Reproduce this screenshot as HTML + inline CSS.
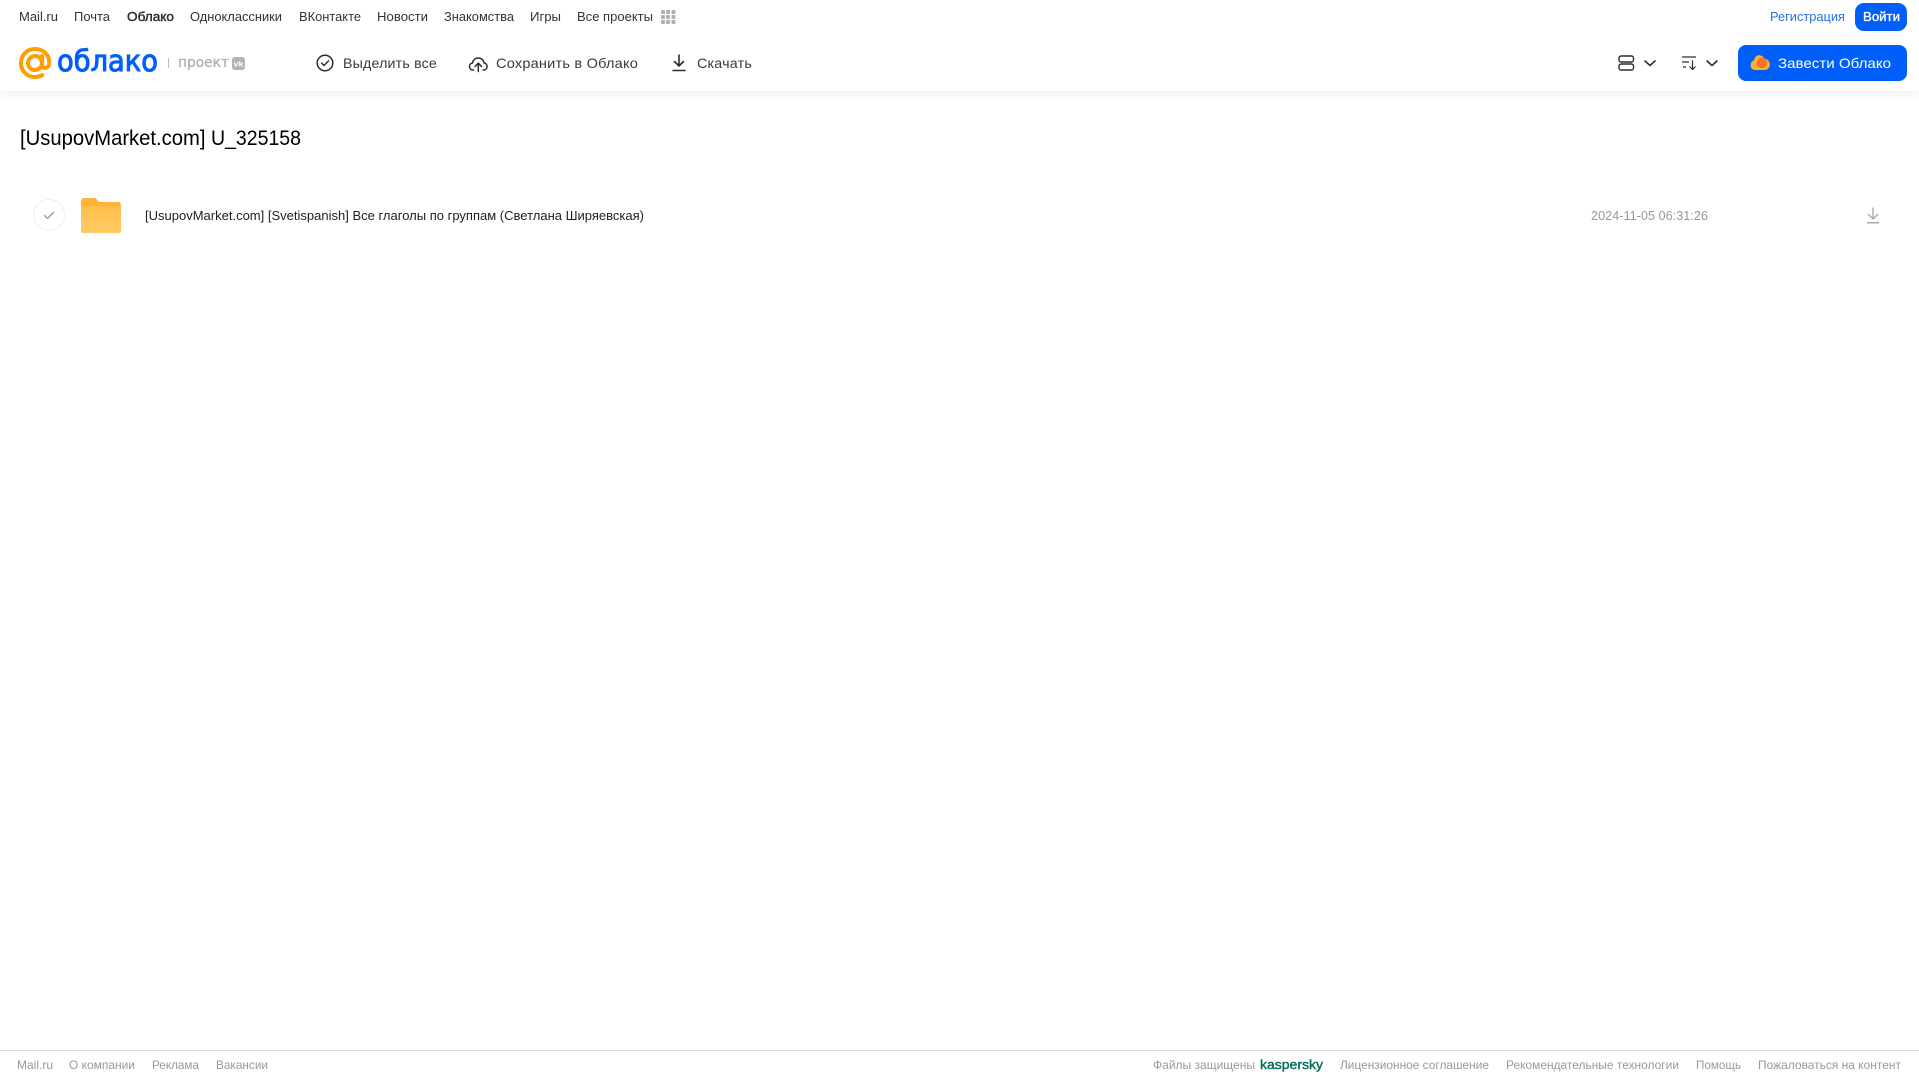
<!DOCTYPE html>
<html lang="ru"><head><meta charset="utf-8"><title>Облако</title>
<style>
html,body{margin:0;padding:0;width:1919px;height:1079px;overflow:hidden;background:#fff}
.hdr{position:absolute;left:0;top:0;width:1919px;height:91px;background:#fff;box-shadow:0 2px 10px rgba(0,0,0,.07)}
.ftr{position:absolute;left:0;top:1050px;width:1919px;height:29px;border-top:1px solid #d9d9d9;box-sizing:border-box}
svg{position:absolute;left:0;top:0}
text{font-family:"Liberation Sans",sans-serif}
.t{font-size:12.5px;fill:#333}
.b{font-size:14px;fill:#3a3a3a;letter-spacing:.2px}
.f{font-size:12px;fill:#999}
</style></head><body>
<div class="hdr"></div><div class="ftr"></div>
<svg width="1919" height="1079" viewBox="0 0 1919 1079">
<defs><linearGradient id="fg" x1="0" y1="0" x2="0" y2="1"><stop offset="0" stop-color="#ffbe4a"/><stop offset="1" stop-color="#ffcb66"/></linearGradient></defs>
<text class="t" x="19" y="21" textLength="39" lengthAdjust="spacingAndGlyphs">Mail.ru</text>
<text class="t" x="74" y="21" textLength="36" lengthAdjust="spacingAndGlyphs">Почта</text>
<text class="t" x="127" y="21" textLength="47" lengthAdjust="spacingAndGlyphs" stroke="#333" stroke-width=".45" style="fill:#2c2d2e">Облако</text>
<text class="t" x="190" y="21" textLength="92" lengthAdjust="spacingAndGlyphs">Одноклассники</text>
<text class="t" x="299" y="21" textLength="62" lengthAdjust="spacingAndGlyphs">ВКонтакте</text>
<text class="t" x="377" y="21" textLength="51" lengthAdjust="spacingAndGlyphs">Новости</text>
<text class="t" x="444" y="21" textLength="70" lengthAdjust="spacingAndGlyphs">Знакомства</text>
<text class="t" x="530" y="21" textLength="31" lengthAdjust="spacingAndGlyphs">Игры</text>
<text class="t" x="577" y="21" textLength="76" lengthAdjust="spacingAndGlyphs">Все проекты</text>
<g fill="#b0b0b0">
<rect x="661" y="10" width="4" height="4" rx="1"/><rect x="666" y="10" width="4" height="4" rx="1"/><rect x="671.500" y="10" width="4" height="4" rx="1"/>
<rect x="661" y="15" width="4" height="4" rx="1"/><rect x="666" y="15" width="4" height="4" rx="1"/><rect x="671.500" y="15" width="4" height="4" rx="1"/>
<rect x="661" y="20" width="4" height="4" rx="1"/><rect x="666" y="20" width="4" height="4" rx="1"/><rect x="671.500" y="20" width="4" height="4" rx="1"/>
</g>
<text x="1770" y="21" class="t" style="fill:#2a6fe0" textLength="75" lengthAdjust="spacingAndGlyphs">Регистрация</text>
<rect x="1855" y="3" width="52" height="28" rx="9" fill="#005ff9"/>
<text x="1863" y="21" font-size="12.500" fill="#fff" stroke="#fff" stroke-width=".35" textLength="37" lengthAdjust="spacingAndGlyphs">Войти</text>

<!-- logo -->
<circle cx="35" cy="63" r="7" fill="none" stroke="#ff9e00" stroke-width="4"/>
<path d="M42 56v8.500c0 5 7.300 5 7.300-2C49.300 54.500 43 49 35 49S21 55 21 63s6 14 14 14c2.800 0 5-.6 7.300-1.800" fill="none" stroke="#ff9e00" stroke-width="4" stroke-linecap="round"/>
<text x="57" y="71" style="font-family:'DejaVu Sans',sans-serif" font-size="29" fill="#005ff9" stroke="#005ff9" stroke-width="1" textLength="101" lengthAdjust="spacingAndGlyphs">облако</text>
<rect x="168" y="58" width="1" height="10" fill="#bbb"/>
<text x="178" y="67" style="font-family:'DejaVu Sans',sans-serif" font-size="14" fill="#b0b0b0" stroke="#b0b0b0" stroke-width=".3" textLength="51" lengthAdjust="spacingAndGlyphs">проект</text>
<rect x="232" y="57" width="13" height="13" rx="3" fill="#b3b3b3"/>
<text x="233.500" y="66.500" font-size="7.500" font-weight="700" fill="#fff" textLength="10" lengthAdjust="spacingAndGlyphs">vk</text>

<!-- toolbar -->
<circle cx="325" cy="63" r="7.800" fill="none" stroke="#2c2d2e" stroke-width="1.500"/>
<path d="M321.500 63l2.500 2.500 4.500-4.500" fill="none" stroke="#2c2d2e" stroke-width="1.500" stroke-linecap="round" stroke-linejoin="round"/>
<text class="b" x="343" y="68" textLength="94" lengthAdjust="spacingAndGlyphs">Выделить все</text>
<path d="M473.500 70h-.5c-2.400 0-3.500-1.800-3.500-3.500 0-2 1.300-3.300 3-3.500.5-3 2.700-5 5.800-5 3 0 5.300 2 5.800 5 1.700.2 3 1.500 3 3.500 0 1.700-1.100 3.500-3.500 3.500h-.5" fill="none" stroke="#2c2d2e" stroke-width="1.500" stroke-linecap="round"/>
<path d="M478.300 71.500v-8M475 66.500l3.300-3.300 3.300 3.300" fill="none" stroke="#2c2d2e" stroke-width="1.500" stroke-linecap="round" stroke-linejoin="round"/>
<text class="b" x="496" y="68" textLength="142" lengthAdjust="spacingAndGlyphs">Сохранить в Облако</text>
<path d="M679 55v11M674.500 61.500l4.500 4.500 4.500-4.500M673 70.500h12" fill="none" stroke="#2c2d2e" stroke-width="1.600" stroke-linecap="round" stroke-linejoin="round"/>
<text class="b" x="697" y="68" textLength="55" lengthAdjust="spacingAndGlyphs">Скачать</text>

<rect x="1619" y="56" width="14.500" height="6" rx="2" fill="none" stroke="#2c2d2e" stroke-width="1.400"/>
<rect x="1619" y="64" width="14.500" height="6" rx="2" fill="none" stroke="#2c2d2e" stroke-width="1.400"/>
<path d="M1645 61l5 4.500 5-4.500" fill="none" stroke="#2c2d2e" stroke-width="1.600" stroke-linecap="round" stroke-linejoin="round"/>
<path d="M1682 57h14M1682 62h7M1683 67h3M1692.500 60.500v9M1689.500 66.500l3 3 3-3" fill="none" stroke="#2c2d2e" stroke-width="1.200" stroke-linejoin="round"/>
<path d="M1707 61l5 4.500 5-4.500" fill="none" stroke="#2c2d2e" stroke-width="1.600" stroke-linecap="round" stroke-linejoin="round"/>

<rect x="1738" y="45" width="169" height="36" rx="8" fill="#005ff9"/>
<path d="M1755.500 70c-3 0-4.800-2-4.800-4.800 0-2.500 1.500-4.300 3.300-4.900.5-3 2.500-5 5-5 2.400 0 4.300 1.400 5.300 3.300 3 0 5.500 2.700 5.500 5.900 0 3.400-2.500 5.500-5.500 5.500z" fill="#ffb133"/>
<circle cx="1762" cy="63" r="5.300" fill="#f5732a"/>
<text x="1778" y="68" font-size="14" fill="#fff" textLength="113" lengthAdjust="spacingAndGlyphs">Завести Облако</text>

<!-- title -->
<text x="20" y="145" font-size="21" fill="#000" textLength="185.500" lengthAdjust="spacingAndGlyphs">[UsupovMarket.com]</text>
<text x="211" y="145" font-size="21" fill="#000" textLength="90" lengthAdjust="spacingAndGlyphs">U_325158</text>

<!-- row -->
<circle cx="49" cy="215" r="15.500" fill="#fff" stroke="#efefef" stroke-width="1"/>
<path d="M44.500 215.500l3 3 6-6" fill="none" stroke="#999" stroke-width="1.300" stroke-linecap="round" stroke-linejoin="round"/>
<path d="M81 201c0-1.700 1.300-3 3-3h10c1.500 0 2.500 1 3.500 2.200 1 1.300 2 1.800 3.500 1.800h17c1.700 0 3 1.300 3 3v26c0 1.700-1.300 2-3 2H84c-1.700 0-3-.3-3-2z" fill="#ffb433"/>
<path d="M81 206h40v25c0 1.700-1.300 2-3 2H84c-1.700 0-3-.3-3-2z" fill="url(#fg)"/>
<text x="145" y="220" font-size="13" fill="#1f1f1f" textLength="499" lengthAdjust="spacingAndGlyphs">[UsupovMarket.com] [Svetispanish] Все глаголы по группам (Светлана Ширяевская)</text>
<text x="1591" y="220" font-size="12.500" fill="#999" textLength="117" lengthAdjust="spacingAndGlyphs">2024-11-05 06:31:26</text>
<path d="M1873 208v11M1868.500 214.500l4.500 4.500 4.500-4.500" fill="none" stroke="#a8a8a8" stroke-width="1.300" stroke-linecap="round" stroke-linejoin="round"/>
<rect x="1867" y="222" width="12" height="1.500" fill="#a8a8a8"/>

<!-- footer -->
<text class="f" x="17" y="1069" textLength="36" lengthAdjust="spacingAndGlyphs">Mail.ru</text>
<text class="f" x="69" y="1069" textLength="66" lengthAdjust="spacingAndGlyphs">О компании</text>
<text class="f" x="152" y="1069" textLength="47" lengthAdjust="spacingAndGlyphs">Реклама</text>
<text class="f" x="216" y="1069" textLength="52" lengthAdjust="spacingAndGlyphs">Вакансии</text>
<text class="f" x="1153" y="1069" textLength="102" lengthAdjust="spacingAndGlyphs">Файлы защищены</text>
<text x="1260" y="1069" font-size="13" fill="#006d5c" stroke="#006d5c" stroke-width=".4" textLength="63" lengthAdjust="spacingAndGlyphs">kaspersky</text>
<text class="f" x="1340" y="1069" textLength="149" lengthAdjust="spacingAndGlyphs">Лицензионное соглашение</text>
<text class="f" x="1506" y="1069" textLength="173" lengthAdjust="spacingAndGlyphs">Рекомендательные технологии</text>
<text class="f" x="1696" y="1069" textLength="45" lengthAdjust="spacingAndGlyphs">Помощь</text>
<text class="f" x="1758" y="1069" textLength="143" lengthAdjust="spacingAndGlyphs">Пожаловаться на контент</text>
</svg>
</body></html>
